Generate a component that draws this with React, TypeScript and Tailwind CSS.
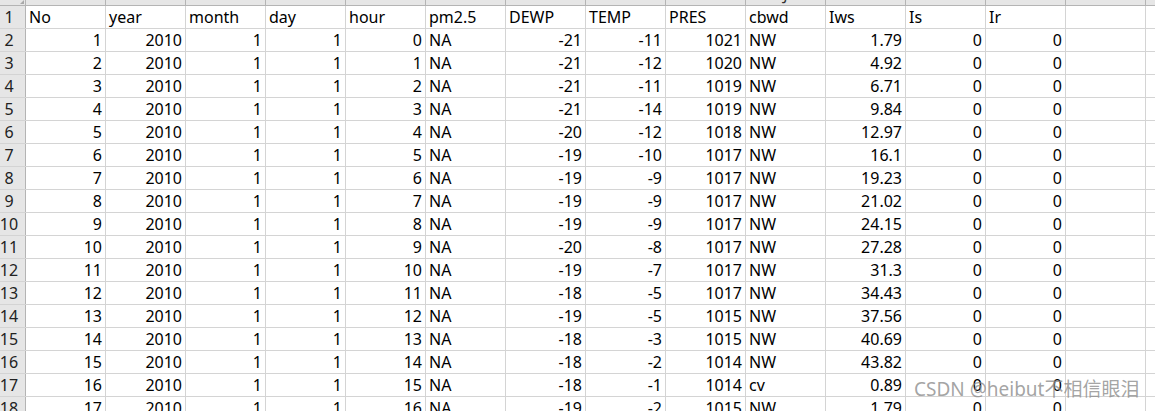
import React from 'react';

const letters = ['A', 'B', 'C', 'D', 'E', 'F', 'G', 'H', 'I', 'J', 'K', 'L', 'M', 'N'];

type Cell = { v: string; num: boolean };

const header = ['No', 'year', 'month', 'day', 'hour', 'pm2.5', 'DEWP', 'TEMP', 'PRES', 'cbwd', 'Iws', 'Is', 'Ir'];

const raw: [number, string, string, string, string][] = [
  [0, '-21', '-11', '1021', '1.79'],
  [1, '-21', '-12', '1020', '4.92'],
  [2, '-21', '-11', '1019', '6.71'],
  [3, '-21', '-14', '1019', '9.84'],
  [4, '-20', '-12', '1018', '12.97'],
  [5, '-19', '-10', '1017', '16.1'],
  [6, '-19', '-9', '1017', '19.23'],
  [7, '-19', '-9', '1017', '21.02'],
  [8, '-19', '-9', '1017', '24.15'],
  [9, '-20', '-8', '1017', '27.28'],
  [10, '-19', '-7', '1017', '31.3'],
  [11, '-18', '-5', '1017', '34.43'],
  [12, '-19', '-5', '1015', '37.56'],
  [13, '-18', '-3', '1015', '40.69'],
  [14, '-18', '-2', '1014', '43.82'],
  [15, '-18', '-1', '1014', '0.89'],
  [16, '-19', '-2', '1015', '1.79'],
];

const rows: Cell[][] = [
  header.map((h) => ({ v: h, num: false })),
  ...raw.map(([hr, dewp, temp, pres, iws], i) => {
    const cbwd = hr === 15 ? 'cv' : 'NW';
    const vals: Cell[] = [
      { v: String(i + 1), num: true },
      { v: '2010', num: true },
      { v: '1', num: true },
      { v: '1', num: true },
      { v: String(hr), num: true },
      { v: 'NA', num: false },
      { v: dewp, num: true },
      { v: temp, num: true },
      { v: pres, num: true },
      { v: cbwd, num: false },
      { v: iws, num: true },
      { v: '0', num: true },
      { v: '0', num: true },
    ];
    return vals;
  }),
];

export default function App() {
  return (
    <div className="relative w-[1155px] h-[411px] overflow-hidden bg-white font-['Noto_Sans',sans-serif] text-[16px] text-black">
      <div className="flex flex-col w-[1200px]">
        {/* column header */}
        <div className="flex h-[23px] -mt-[17px] border-b border-[#b4b4b4] bg-[#e6e6e6] text-[#333] leading-[22px]">
          <div className="relative w-[33px] -ml-[7px] shrink-0 border-r border-[#b4b4b4]">
            <div className="absolute right-[1px] bottom-[1px] w-0 h-0 border-l-[4px] border-l-transparent border-b-[4px] border-b-[#a8a8a8]" />
          </div>
          {letters.map((l) => (
            <div key={l} className="w-[80px] shrink-0 border-r border-[#b4b4b4] text-center">
              {l}
            </div>
          ))}
          <div className="flex-1 text-center">
            <span className="ml-[-1000px]">O</span>
          </div>
        </div>
        {rows.map((r, ri) => (
          <div key={ri} className="flex h-[23px] border-b border-[#d4d4d4] leading-[22px]">
            <div className="w-[33px] -ml-[7px] shrink-0 border-r border-[#b4b4b4] bg-[#e6e6e6] text-center text-[#222] border-b-0">
              {ri + 1}
            </div>
            {r.map((c, ci) => (
              <div
                key={ci}
                className={
                  c.num
                    ? 'w-[80px] shrink-0 border-r border-[#d4d4d4] px-[3px] text-right whitespace-nowrap'
                    : 'w-[80px] shrink-0 border-r border-[#d4d4d4] px-[3px] text-left whitespace-nowrap'
                }
              >
                {c.v}
              </div>
            ))}
            <div className="w-[80px] shrink-0 border-r border-[#d4d4d4]" />
            <div className="flex-1" />
          </div>
        ))}
      </div>
      <div className="absolute left-[914px] top-[376px] text-[19px] leading-[26px] text-[#8c8c8c]/80 font-['Noto_Sans','Noto_Sans_CJK_SC',sans-serif] whitespace-nowrap">
        CSDN @heibut不相信眼泪
      </div>
    </div>
  );
}
